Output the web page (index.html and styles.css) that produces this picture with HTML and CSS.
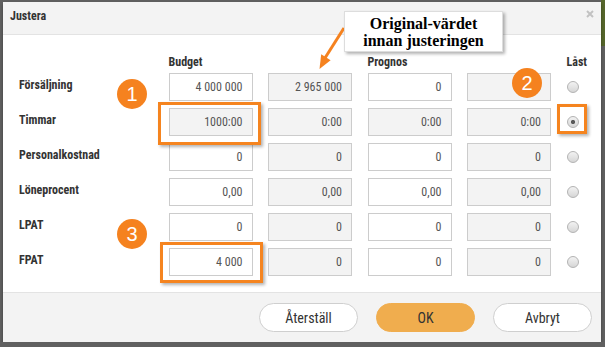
FILE: index.html
```html
<!DOCTYPE html>
<html>
  <head>
    <title>Justera</title>
    <link rel="stylesheet" href="styles.css">
  </head>
  <body>
    <div class="dialog">
      <div class="dialog-header">
        <span class="dialog-title">Justera</span>
        <span class="close">
          <svg width="8" height="8" viewBox="0 0 8 8"><path d="M1 1L7 7M7 1L1 7" stroke="#c2c2c2" stroke-width="2" /></svg>
        </span>
      </div>

      <div class="dialog-body">
        <div class="grid colheads">
          <span></span>
          <span>Budget</span>
          <span></span>
          <span>Prognos</span>
          <span></span>
          <span>Låst</span>
        </div>

        <div class="grid rows">
          <span class="label">Försäljning</span>
          <input class="num" value="4 000 000">
          <input class="num" value="2 965 000" readonly>
          <input class="num" value="0">
          <input class="num" value="0" readonly>
          <span class="lock"><input type="radio" name="last"></span>

          <span class="label">Timmar</span>
          <input class="num" value="1000:00" readonly>
          <input class="num" value="0:00" readonly>
          <input class="num" value="0:00" readonly>
          <input class="num" value="0:00" readonly>
          <span class="lock"><input type="radio" name="last" checked></span>

          <span class="label">Personalkostnad</span>
          <input class="num" value="0">
          <input class="num" value="0" readonly>
          <input class="num" value="0">
          <input class="num" value="0" readonly>
          <span class="lock"><input type="radio" name="last"></span>

          <span class="label">Löneprocent</span>
          <input class="num" value="0,00">
          <input class="num" value="0,00" readonly>
          <input class="num" value="0,00">
          <input class="num" value="0,00" readonly>
          <span class="lock"><input type="radio" name="last"></span>

          <span class="label">LPAT</span>
          <input class="num" value="0">
          <input class="num" value="0" readonly>
          <input class="num" value="0">
          <input class="num" value="0" readonly>
          <span class="lock"><input type="radio" name="last"></span>

          <span class="label">FPAT</span>
          <input class="num" value="4 000">
          <input class="num" value="0" readonly>
          <input class="num" value="0">
          <input class="num" value="0" readonly>
          <span class="lock"><input type="radio" name="last"></span>
        </div>
      </div>

      <div class="dialog-footer">
        <button class="btn">Återställ</button>
        <button class="btn btn-ok">OK</button>
        <button class="btn">Avbryt</button>
      </div>

      <!-- annotations on top of the dialog -->
      <div class="mark mark-timmar"></div>
      <div class="mark mark-lock"></div>
      <div class="mark mark-fpat"></div>

      <div class="badge badge-1">1</div>
      <div class="badge badge-2">2</div>
      <div class="badge badge-3">3</div>

      <svg class="arrow" width="598" height="340" viewBox="0 0 598 340">
        <line x1="341" y1="26" x2="322" y2="56" stroke="#f5821f" stroke-width="3" />
        <polygon points="327.6,58.2 318.2,52.3 316.5,67" fill="#f5821f" />
      </svg>
      <div class="callout">Original-värdet<br>innan justeringen</div>
    </div>
  </body>
</html>
```

FILE: styles.css
```css
html {
  background: linear-gradient(#56662b, #56662b) right top / 4px 46px no-repeat, #606060;
}
body {
  margin: 0;
  padding: 2px 0 0 3px;
  font-family: Roboto, "DejaVu Sans Condensed", sans-serif;
  font-stretch: 75%;
  color: #333;
}

.dialog {
  position: relative;
  width: 598px;
  height: 340px;
  background-color: #fff;
  box-shadow: 0 2px 3px rgba(0, 0, 0, 0.35);
}

.dialog-header {
  display: flex;
  justify-content: space-between;
  box-sizing: border-box;
  height: 33px;
  padding: 7px 7px 0 7px;
  background-color: #f3f3f3;
  border-bottom: 1px solid #e3e3e3;
}
.dialog-title {
  font-weight: bold;
  font-size: 12px;
  line-height: 14px;
}
.close {
  display: block;
  padding-top: 1px;
}
.close svg {
  display: block;
}

.dialog-body {
  box-sizing: border-box;
  height: 257px;
  padding: 20px 0 0 16px;
}

.grid {
  display: grid;
  grid-template-columns: 134px repeat(4, 84px) 1fr;
  column-gap: 15.5px;
}
.colheads {
  font-size: 12px;
  font-weight: bold;
  line-height: 14px;
  margin-bottom: 4px;
}
.rows {
  row-gap: 7px;
}

.label {
  font-size: 12px;
  font-weight: bold;
  line-height: 14px;
  padding-top: 5px;
}

.num {
  box-sizing: border-box;
  width: 84px;
  height: 28px;
  margin: 0;
  padding: 0 9px 0 4px;
  border: 1px solid #cccccc;
  background-color: #fff;
  font-family: Roboto, "DejaVu Sans Condensed", sans-serif;
  font-stretch: 75%;
  font-size: 12px;
  color: #555;
  text-align: right;
  outline: none;
}
.num[readonly] {
  background-color: #f3f3f3;
}

.lock {
  display: flex;
  align-items: center;
}
.lock input {
  appearance: none;
  box-sizing: border-box;
  width: 12px;
  height: 12px;
  margin: 0;
  border: 1px solid #b3b3b3;
  border-radius: 50%;
  background: linear-gradient(#f2f2f2, #d6d6d6);
}
.lock input:checked {
  background: radial-gradient(circle, #5a5a5a 0, #5a5a5a 1.8px, transparent 2.4px), linear-gradient(#f2f2f2, #d6d6d6);
}

.dialog-footer {
  display: flex;
  justify-content: flex-end;
  gap: 18px;
  box-sizing: border-box;
  height: 50px;
  padding: 10px 9px 0 0;
  background-color: #f3f3f3;
  border-top: 1px solid #e3e3e3;
}
.btn {
  width: 99px;
  height: 29px;
  border: 1px solid #cfcfcf;
  border-radius: 15px;
  background-color: #fff;
  font-family: Roboto, "DejaVu Sans Condensed", sans-serif;
  font-stretch: 75%;
  font-size: 14px;
  color: #333;
}
.btn-ok {
  background-color: #f0ad4e;
  border-color: #f0ad4e;
}

/* annotations */
.mark {
  position: absolute;
  box-sizing: border-box;
  border: 3px solid #f5841f;
  box-shadow: 2px 2px 3px rgba(0, 0, 0, 0.3);
}
.mark-timmar {
  left: 155px;
  top: 100px;
  width: 103px;
  height: 43px;
}
.mark-lock {
  left: 554px;
  top: 102px;
  width: 30px;
  height: 30px;
}
.mark-fpat {
  left: 157px;
  top: 240px;
  width: 103px;
  height: 41px;
}

.badge {
  position: absolute;
  width: 30px;
  height: 30px;
  border-radius: 50%;
  background-color: #f5821f;
  color: #fff;
  font-family: "Liberation Sans", Arial, sans-serif;
  font-size: 20px;
  line-height: 30px;
  text-align: center;
}
.badge-1 {
  left: 114px;
  top: 77px;
}
.badge-2 {
  left: 509px;
  top: 66px;
}
.badge-3 {
  left: 114px;
  top: 217px;
}

.arrow {
  position: absolute;
  left: 0;
  top: 0;
}

.callout {
  position: absolute;
  left: 341px;
  top: 9px;
  box-sizing: border-box;
  width: 159px;
  height: 41px;
  padding-top: 3px;
  background-color: #fff;
  border: 1px solid #dddddd;
  box-shadow: 2px 2px 3px rgba(0, 0, 0, 0.3);
  font-family: "Liberation Serif", "Times New Roman", serif;
  font-weight: bold;
  font-size: 16px;
  line-height: 17px;
  text-align: center;
  color: #000;
  font-stretch: normal;
}
```
